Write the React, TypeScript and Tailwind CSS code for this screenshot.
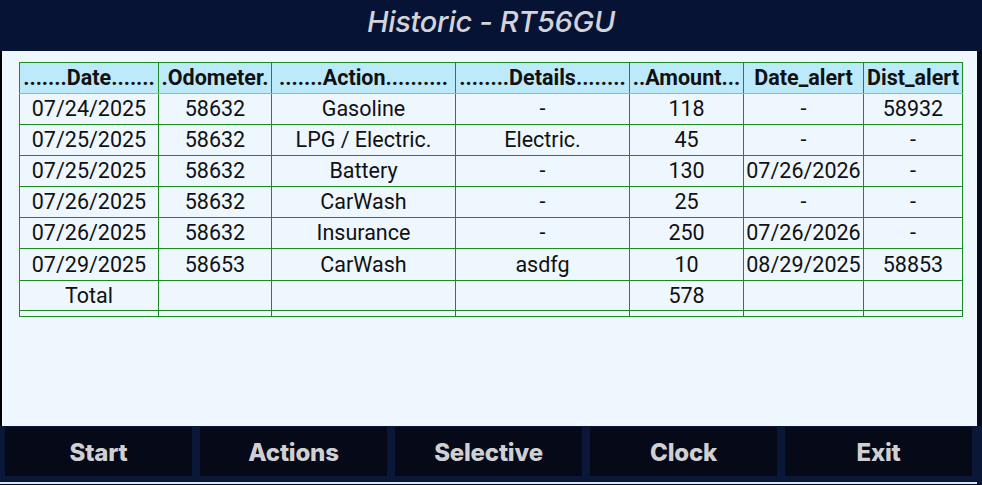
import React from "react";

const COLS = [
  { label: ".......Date.......", w: "w-[139px]" },
  { label: ".Odometer.", w: "w-[113px]" },
  { label: ".......Action..........", w: "w-[184px]" },
  { label: "........Details........", w: "w-[174px]" },
  { label: "..Amount...", w: "w-[114px]" },
  { label: "Date_alert", w: "w-[120px]" },
  { label: "Dist_alert", w: "w-[99px]" },
];

const ROWS: string[][] = [
  ["07/24/2025", "58632", "Gasoline", "-", "118", "-", "58932"],
  ["07/25/2025", "58632", "LPG / Electric.", "Electric.", "45", "-", "-"],
  ["07/25/2025", "58632", "Battery", "-", "130", "07/26/2026", "-"],
  ["07/26/2025", "58632", "CarWash", "-", "25", "-", "-"],
  ["07/26/2025", "58632", "Insurance", "-", "250", "07/26/2026", "-"],
  ["07/29/2025", "58653", "CarWash", "asdfg", "10", "08/29/2025", "58853"],
  ["Total", "", "", "", "578", "", ""],
];

const BUTTONS = ["Start", "Actions", "Selective", "Clock", "Exit"];

export default function App(): React.JSX.Element {
  return (
    <div className="w-[982px] h-[485px] flex flex-col bg-[#0a1736] overflow-hidden">
      {/* title bar */}
      <div className="h-[51px] bg-[#061335] flex justify-center pt-[3px]">
        <h1 className="text-[29px] leading-[38px] italic font-medium tracking-[-0.3px] text-[#d2d4da] font-['Inter',sans-serif]">
          Historic - RT56GU
        </h1>
      </div>

      {/* table area */}
      <div className="flex flex-1">
        <div className="w-[2px] bg-black" />
        <div className="flex-1 bg-[#eef6fe] pt-[11px] pl-[17px]">
          <table className="border-collapse table-fixed font-['Roboto',sans-serif] text-[21.5px] text-[#111]">
            <thead>
              <tr className="h-[31px] bg-[#bdeafb]">
                {COLS.map((c) => (
                  <th
                    key={c.label}
                    className={`${c.w} p-0 border border-[#1e8a22] border-b-[#7cc98a] font-bold leading-none whitespace-nowrap overflow-hidden`}
                  >
                    {c.label}
                  </th>
                ))}
              </tr>
            </thead>
            <tbody>
              {ROWS.map((r, i) => (
                <tr key={i} className={i === 6 ? "h-[30px]" : i === 5 ? "h-[32px]" : "h-[31px]"}>
                  {r.map((v, j) => (
                    <td
                      key={j}
                      className="p-0 border border-[#1e8a22] text-center leading-none whitespace-nowrap"
                    >
                      {v}
                    </td>
                  ))}
                </tr>
              ))}
              <tr className="h-[6px]">
                {COLS.map((c) => (
                  <td key={c.label} className="p-0 border border-[#1e8a22]" />
                ))}
              </tr>
            </tbody>
          </table>
        </div>
        <div className="w-[5px] bg-[#050b1c]" />
      </div>

      {/* bottom buttons */}
      <div className="h-[59px] flex flex-col">
        <div className="h-[56px] bg-[#0a1736] flex gap-[8px] pl-[5px] pr-[10px] pt-[1px] pb-[6px]">
          {BUTTONS.map((b) => (
            <button
              key={b}
              className="flex-1 bg-[#050918] flex items-center justify-center pt-[3px] text-[24px] font-extrabold text-[#d0d0d2] tracking-[-0.2px] font-['Inter',sans-serif]"
            >
              {b}
            </button>
          ))}
        </div>
        <div className="h-[2px] bg-[#dde6f2] mr-[5px]" />
        <div className="h-[1px] bg-[#050b1c]" />
      </div>
    </div>
  );
}
